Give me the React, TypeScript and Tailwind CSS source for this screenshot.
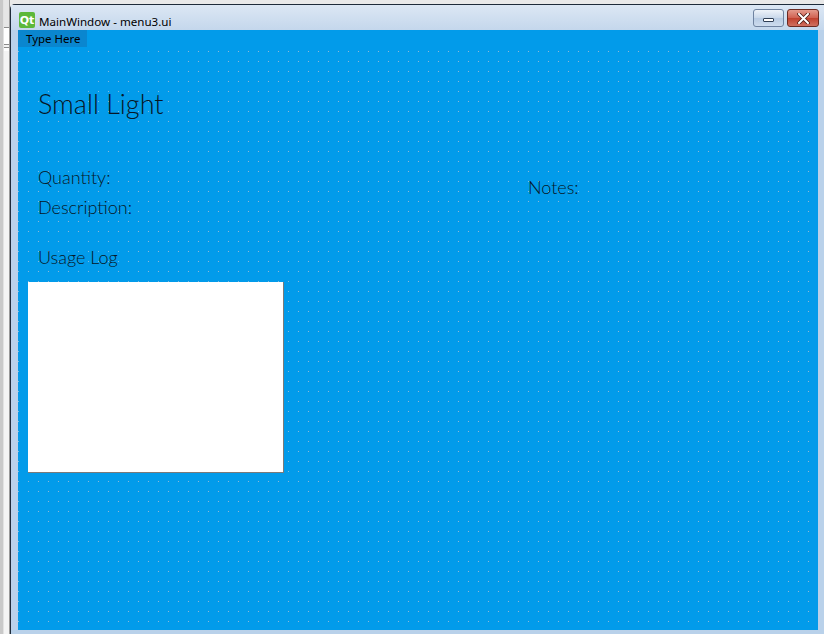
import React from "react";

export default function App() {
  return (
    <div className="relative flex h-[634px] w-[824px] overflow-hidden bg-[#e9e9e9]">
      {/* left strip of the desktop behind */}
      <div className="flex h-full w-[10px] shrink-0">
        <div className="h-full w-[3px] bg-[#c9c9c9]" />
        <div className="h-full w-[1px] bg-[#e2e2e2]" />
        <div className="flex h-full w-[5px] flex-col bg-[#f4f4f4]">
          <div className="h-[27px] bg-[#e6e6e6]" />
          <div className="h-[18px] border-y border-[#8c8c8c] bg-white" />
          <div className="h-[2px]" />
          <div className="h-[4px] border-t border-[#8c8c8c] bg-white" />
        </div>
        <div className="h-full w-[1px] bg-[#9a9a9a]" />
      </div>

      {/* window */}
      <div className="mt-[4px] flex flex-1 flex-col rounded-tl-[5px] border-l border-t border-[#1e2b3a] bg-[#b9d1ea]">
        {/* title bar */}
        <div className="flex h-[25px] items-start bg-[linear-gradient(to_bottom,#dce7f4,#c4d7ec)] pl-[8px] pr-[5px]">
          <div className="mt-[7px] flex h-[16px] w-[16px] items-center justify-center rounded-[2px] bg-[#5cb83a] text-[11px] font-bold leading-none text-white [font-family:'DejaVu_Sans',sans-serif]">
            Qt
          </div>
          <div className="ml-[4px] mt-[10px] text-[11.6px] leading-[14px] text-black [font-family:'Noto_Sans','Open_Sans',sans-serif]">
            MainWindow - menu3.ui
          </div>
          <div className="flex-1" />
          <div className="mt-[4px] flex gap-[3px]">
            <div className="flex h-[18px] w-[31px] items-center justify-center rounded-[3px] border border-[#6f83a0] bg-[linear-gradient(to_bottom,#eef3f9,#c9d8ea_50%,#b7cbe3_51%,#cddcee)]">
              <div className="mt-[4px] h-[4px] w-[11px] rounded-[1px] border border-[#2f3f55] bg-white" />
            </div>
            <div className="flex h-[18px] w-[32px] items-center justify-center rounded-[3px] border border-[#6a2a22] bg-[linear-gradient(to_bottom,#e49a8c,#d06050_50%,#c0402e_51%,#d07060)]">
              <svg width="13" height="11" viewBox="0 0 13 11">
                <path d="M2 1 L11 10 M11 1 L2 10" stroke="#4a1a14" strokeWidth="3.6" strokeLinecap="round" />
                <path d="M2 1 L11 10 M11 1 L2 10" stroke="#ffffff" strokeWidth="2" strokeLinecap="round" />
              </svg>
            </div>
          </div>
        </div>

        {/* client area */}
        <div className="flex flex-1 pl-[7px] pr-[6px] pb-[4px]">
          <div className="relative flex flex-1 flex-col bg-[#029bea]">
            {/* menu bar */}
            <div className="flex h-[17px] shrink-0">
              <div className="flex h-[17px] w-[69px] items-center bg-[#0a86cf] pl-[8px] text-[11.5px] text-black [font-family:'Noto_Sans','Open_Sans',sans-serif]">
                Type Here
              </div>
            </div>
            {/* dotted form canvas */}
            <div className="flex flex-1 flex-col bg-[linear-gradient(to_right,transparent_1px,#029bea_1px),linear-gradient(to_bottom,transparent_1px,#029bea_1px),linear-gradient(#8fbad8,#8fbad8)] bg-[size:10px_10px] bg-[position:0px_4px] pl-[20px] text-[#071626] [font-family:'Lato','Open_Sans',sans-serif]">
              <div className="mt-[40px] text-[27px] font-light leading-[34px]">Small Light</div>
              <div className="mt-[41px] flex">
                <div className="w-[490px]">
                  <div className="text-[18px] font-light leading-[30px]">Quantity:</div>
                  <div className="text-[18px] font-light leading-[30px]">Description:</div>
                </div>
                <div className="pt-[10px] text-[18px] font-light leading-[30px]">Notes:</div>
              </div>
              <div className="mt-[20px] text-[18px] font-light leading-[30px]">Usage Log</div>
              <div className="-ml-[10px] mt-[10px] h-[191px] w-[256px] border-b border-r border-[#7a7a7a] bg-white" />
            </div>
          </div>
        </div>
      </div>
    </div>
  );
}
